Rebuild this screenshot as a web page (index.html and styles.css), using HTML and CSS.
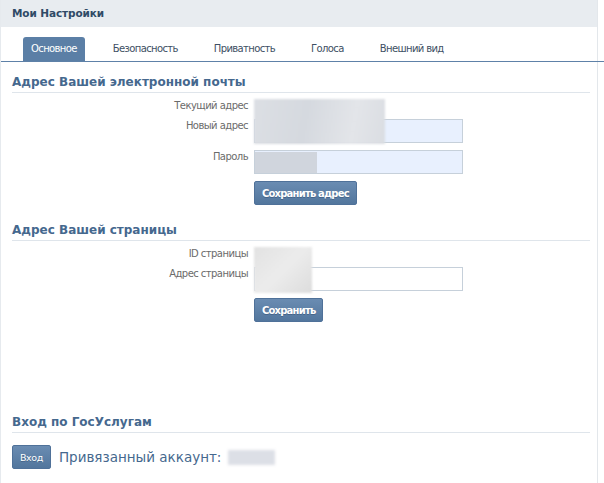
FILE: index.html
```html
<!DOCTYPE html>
<html lang="ru">
<head>
<meta charset="utf-8">
<title>Мои Настройки</title>
<link rel="stylesheet" href="styles.css">
</head>
<body>
<div class="page">
  <div class="header">Мои Настройки</div>
  <div class="tabs">
    <span class="tab active">Основное</span>
    <span class="tab">Безопасность</span>
    <span class="tab">Приватность</span>
    <span class="tab">Голоса</span>
    <span class="tab">Внешний вид</span>
  </div>

  <div class="section s1">
    <div class="section-title">Адрес Вашей электронной почты</div>
    <div class="form">
      <div class="blur blur-email"></div>
      <div class="label row-short">Текущий адрес</div>
      <div class="value row-short"></div>
      <div class="label">Новый адрес</div>
      <div class="value"><div class="input autofill"></div></div>
      <div class="label">Пароль</div>
      <div class="value"><div class="input autofill"><div class="blur-inline pass"></div></div></div>
      <div class="label"></div>
      <div class="value"><button class="btn">Сохранить адрес</button></div>
    </div>
  </div>

  <div class="section s2">
    <div class="section-title">Адрес Вашей страницы</div>
    <div class="form">
      <div class="blur blur-id"></div>
      <div class="label row-short">ID страницы</div>
      <div class="value row-short"></div>
      <div class="label">Адрес страницы</div>
      <div class="value"><div class="input"></div></div>
      <div class="label"></div>
      <div class="value"><button class="btn">Сохранить</button></div>
    </div>
  </div>

  <div class="section s3">
    <div class="section-title">Вход по ГосУслугам</div>
    <div class="gos">
      <button class="btn btn-small">Вход</button>
      <span class="linked">Привязанный аккаунт:</span>
      <span class="blur-inline acc"></span>
    </div>
  </div>
</div>
</body>
</html>
```

FILE: styles.css
```css
* { box-sizing: border-box; }
html, body { margin: 0; padding: 0; background: #fff; }
body {
  font-family: "DejaVu Sans", Tahoma, sans-serif;
  font-size: 10px;
  color: #000;
}
.page {
  width: 598px;
  height: 483px;
  border-left: 1px solid #e6eaee;
  border-right: 1px solid #e3e7eb;
}
.header {
  height: 27px;
  background: #e8ecf0;
  padding-left: 11px;
  font-weight: bold;
  font-size: 10.5px;
  letter-spacing: -0.1px;
  line-height: 27px;
  color: #2f4a66;
}
.tabs {
  height: 35px;
  margin-right: -8px;
  border-bottom: 1px solid #5e81a8;
  display: flex;
  align-items: flex-end;
  padding-left: 22px;
  gap: 20px;
}
.tab {
  height: 24px;
  line-height: 24px;
  padding: 0 8px;
  color: #3d4f63;
  font-size: 10px;
  letter-spacing: -0.62px;
}
.tab.active {
  background: #5b7fa6;
  color: #fff;
  border-radius: 3px 3px 0 0;
}
.section { margin: 0 7px 0 11px; }
.section-title {
  font-weight: bold;
  font-size: 12px;
  line-height: 16px;
  color: #45688e;
  border-bottom: 1px solid #dfe5eb;
  padding-bottom: 2px;
}
.s1 .section-title { padding-top: 12px; }
.s2 .section-title { padding-top: 17px; }
.s3 .section-title { padding-top: 92px; }
.form {
  position: relative;
  display: grid;
  grid-template-columns: 236px 209px;
  column-gap: 6px;
  row-gap: 7px;
  margin-top: 6px;
}
.label {
  text-align: right;
  color: #6b6b6b;
  line-height: 14px;
  font-size: 10px;
  letter-spacing: -0.55px;
}
.row-short { height: 20px; margin-bottom: -7px; }
.input {
  position: relative;
  height: 24px;
  border: 1px solid #c6d0da;
  background: #fff;
}
.input.autofill { background: #e8f0fe; }
.blur {
  position: absolute;
  left: 242px;
  top: 0;
  background: linear-gradient(100deg, #dcdfe4 0%, #d5d9df 40%, #e3e5e9 75%, #dadde2 100%);
  filter: blur(1px);
  z-index: 2;
}
.blur-email { width: 131px; height: 45px; }
.blur-id { width: 58px; height: 46px; background: linear-gradient(135deg, #e2e2e2 0%, #ececec 50%, #dcdcdc 100%); }
.blur-inline { display: inline-block; }
.pass {
  position: absolute;
  left: 0; top: 1px;
  width: 62px; height: 21px;
  background: #d0d5dd;
  filter: blur(0.5px);
}
.btn {
  font-family: "DejaVu Sans", Tahoma, sans-serif;
  font-weight: bold;
  font-size: 10px;
  letter-spacing: -0.8px;
  color: #fff;
  height: 24px;
  padding: 0 7px;
  border: 1px solid #4f7199;
  border-radius: 2px;
  background: linear-gradient(#6a8cb2, #52769d);
  text-shadow: 0 1px 0 #45658a;
  cursor: pointer;
}
.gos {
  display: flex;
  align-items: center;
  gap: 8px;
  margin-top: 12px;
}
.btn-small { font-weight: normal; font-size: 9.5px; letter-spacing: -0.4px; padding: 0 7px; height: 24px; }
.linked {
  font-size: 13.5px;
  color: #45688e;
}
.acc {
  width: 47px; height: 15px;
  margin-left: -1px;
  background: #dcdfe6;
  filter: blur(1.5px);
}
```
